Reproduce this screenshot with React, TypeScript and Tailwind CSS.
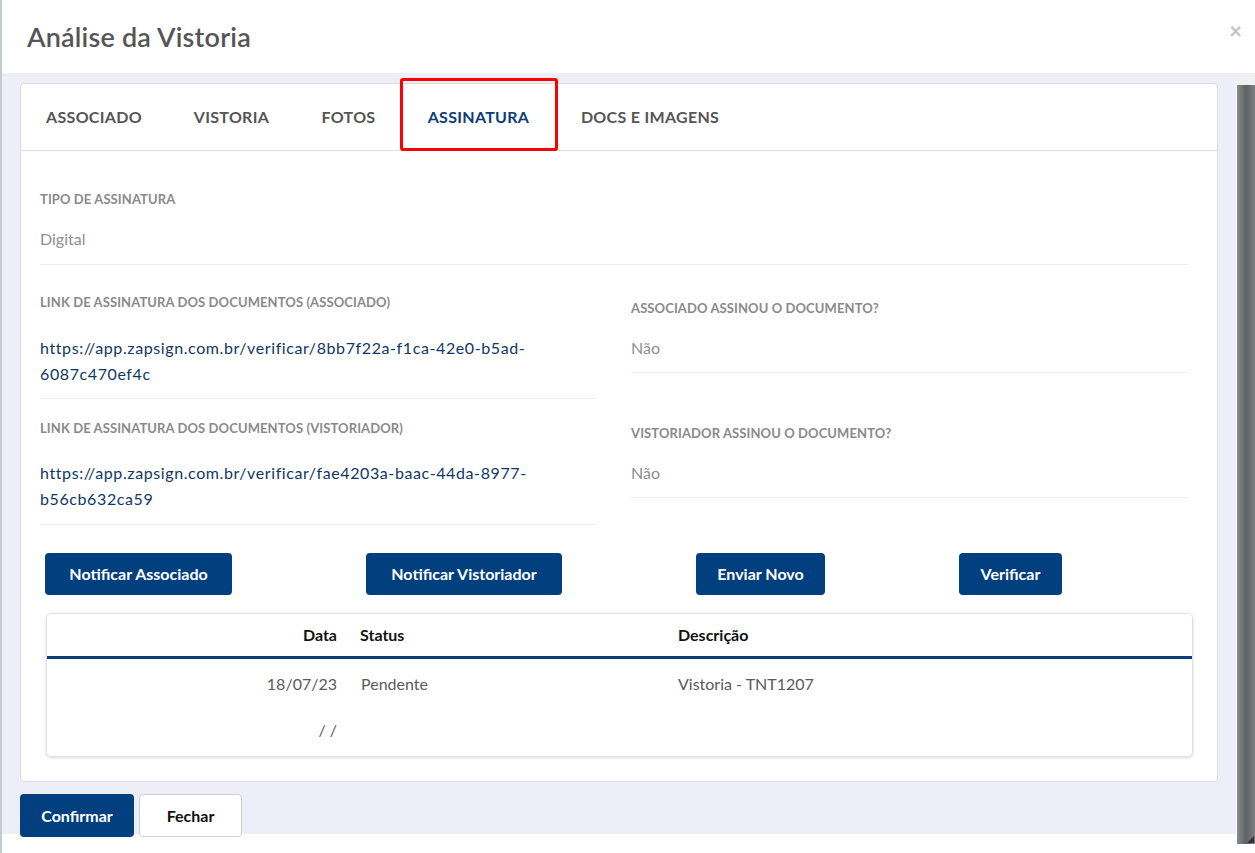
import React from 'react';

const font = { fontFamily: '"Source Sans Pro", Lato, "Liberation Sans", sans-serif' };

const tabs = [
  { label: 'ASSOCIADO', w: 'w-[146px]' },
  { label: 'VISTORIA', w: 'w-[129px]' },
  { label: 'FOTOS', w: 'w-[105px]' },
  { label: 'ASSINATURA', w: 'w-[155px]', active: true },
  { label: 'DOCS E IMAGENS', w: 'w-[188px]' },
];

const Label: React.FC<{ children: React.ReactNode }> = ({ children }) => (
  <div className="text-[13px] leading-[18px] font-bold text-[#8a8a8a] tracking-[0.1px]">{children}</div>
);

const App: React.FC = () => {
  return (
    <div className="flex h-[853px] w-[1255px] bg-white overflow-hidden" style={font}>
      {/* page behind the modal */}
      <div className="w-[2px] shrink-0 bg-[#c4c9d4]" />

      <div className="flex-1 min-w-0 flex flex-col">
        {/* header */}
        <div className="h-[73px] flex items-center justify-between pl-[25px] pr-[13px] shrink-0">
          <h1 className="text-[27px] font-semibold text-[#555] leading-none tracking-[0.2px]">Análise da Vistoria</h1>
          <span className="self-start mt-[20px] text-[22px] text-[#c2c2c2] font-bold leading-none">×</span>
        </div>

        <div className="flex flex-1 min-w-0">
          <div className="flex-1 min-w-0 flex flex-col">
            <div className="h-[761px] bg-[#eeeef8] px-[18px] pt-[10px]">
              {/* card */}
              <div className="h-[699px] bg-white border border-[#dcdcdc] rounded-[4px]">
                {/* tabs */}
                <div className="h-[67px] flex border-b border-[#dcdcdc]">
                  {tabs.map((t) => (
                    <div
                      key={t.label}
                      className={`${t.w} relative flex items-center justify-center text-[16px] font-bold tracking-[0.3px] ${
                        t.active ? 'text-[#0b3d78]' : 'text-[#555]'
                      }`}
                    >
                      {t.label}
                      {t.active && (
                        <>
                          <div className="absolute left-[1px] right-[2px] bottom-[-1px] h-[2px] bg-[#0b3d78]" />
                          <div className="absolute left-[-1px] right-[-2px] top-[-6px] bottom-[-1px] border-[3px] border-[#ff0000] rounded-[3px]" />
                        </>
                      )}
                    </div>
                  ))}
                </div>

                <div className="pl-[19px] pr-[29px]">
                  {/* tipo */}
                  <div className="pt-[39px] pb-[13px] border-b border-[#eeeeee]">
                    <Label>TIPO DE ASSINATURA</Label>
                    <div className="mt-[19px] text-[16px] leading-[24px] text-[#8f8f8f]">Digital</div>
                  </div>

                  <div className="grid grid-cols-2 gap-x-[34px] items-start">
                    <div className="pt-[28px] pb-[11px] border-b border-[#eeeeee]">
                      <Label>LINK DE ASSINATURA DOS DOCUMENTOS (ASSOCIADO)</Label>
                      <div className="mt-[24px] text-[16px] leading-[26px] text-[#0f3765] tracking-[0.6px]">
                        https://app.zapsign.com.br/verificar/8bb7f22a-f1ca-42e0-b5ad-
                        <br />
                        6087c470ef4c
                      </div>
                    </div>
                    <div className="pt-[34px] pb-[12px] border-b border-[#eeeeee]">
                      <Label>ASSOCIADO ASSINOU O DOCUMENTO?</Label>
                      <div className="mt-[19px] text-[16px] leading-[24px] text-[#8f8f8f]">Não</div>
                    </div>

                    <div className="pt-[20px] pb-[12px] border-b border-[#eeeeee]">
                      <Label>LINK DE ASSINATURA DOS DOCUMENTOS (VISTORIADOR)</Label>
                      <div className="mt-[23px] text-[16px] leading-[26px] text-[#0f3765] tracking-[0.6px]">
                        https://app.zapsign.com.br/verificar/fae4203a-baac-44da-8977-
                        <br />
                        b56cb632ca59
                      </div>
                    </div>
                    <div className="pt-[25px] pb-[12px] border-b border-[#eeeeee]">
                      <Label>VISTORIADOR ASSINOU O DOCUMENTO?</Label>
                      <div className="mt-[19px] text-[16px] leading-[24px] text-[#8f8f8f]">Não</div>
                    </div>
                  </div>

                  {/* action buttons */}
                  <div className="mt-[28px] ml-[5px] flex gap-[134px]">
                    <button className="w-[187px] h-[42px] rounded-[4px] bg-[#023f7e] text-white text-[16px] font-bold">
                      Notificar Associado
                    </button>
                    <button className="w-[196px] h-[42px] rounded-[4px] bg-[#023f7e] text-white text-[16px] font-bold">
                      Notificar Vistoriador
                    </button>
                    <button className="w-[129px] h-[42px] rounded-[4px] bg-[#023f7e] text-white text-[16px] font-bold">
                      Enviar Novo
                    </button>
                    <button className="w-[103px] h-[42px] rounded-[4px] bg-[#023f7e] text-white text-[16px] font-bold">
                      Verificar
                    </button>
                  </div>

                  {/* history table */}
                  <div className="mt-[18px] ml-[6px] w-[1147px] h-[144px] rounded-[5px] border border-[#e2e2e2] shadow-[0_1px_3px_rgba(0,0,0,0.15)] text-[16px]">
                    <div className="h-[45px] flex items-center font-bold text-[#111] border-b-[3px] border-[#0b3d78]">
                      <div className="w-[300px] text-right pr-[10px]">Data</div>
                      <div className="w-[321px] pl-[13px]">Status</div>
                      <div className="pl-[10px]">Descrição</div>
                    </div>
                    <div className="h-[50px] flex items-center text-[#5a5a5a]">
                      <div className="w-[300px] text-right pr-[10px]">18/07/23</div>
                      <div className="w-[321px] pl-[14px]">Pendente</div>
                      <div className="pl-[10px]">Vistoria - TNT1207</div>
                    </div>
                    <div className="h-[42px] flex items-center text-[#5a5a5a]">
                      <div className="w-[300px] text-right pr-[10px]">/ /</div>
                    </div>
                  </div>
                </div>
              </div>

              {/* footer */}
              <div className="mt-[12px] flex gap-[5px]">
                <button className="w-[114px] h-[43px] rounded-[4px] bg-[#023f7e] text-white text-[16px] font-bold">
                  Confirmar
                </button>
                <button className="w-[103px] h-[43px] rounded-[4px] bg-white border border-[#cfcfcf] text-[#111] text-[16px] font-bold">
                  Fechar
                </button>
              </div>
            </div>
          </div>

          {/* scrollbar */}
          <div className="w-[19px] shrink-0 flex flex-col">
            <div className="h-[12px] bg-[#f0f0f0]" />
            <div className="h-[759px] ml-[1px] bg-gradient-to-r from-[#8a8d90] via-[#5f6265] to-[#7d8083] flex items-end justify-end">
              <div className="w-0 h-0 border-l-[7px] border-l-transparent border-b-[7px] border-b-[#3a3033] mr-[1px] mb-[1px]" />
            </div>
            <div className="flex-1 bg-white" />
          </div>
        </div>
      </div>
    </div>
  );
};

export default App;
